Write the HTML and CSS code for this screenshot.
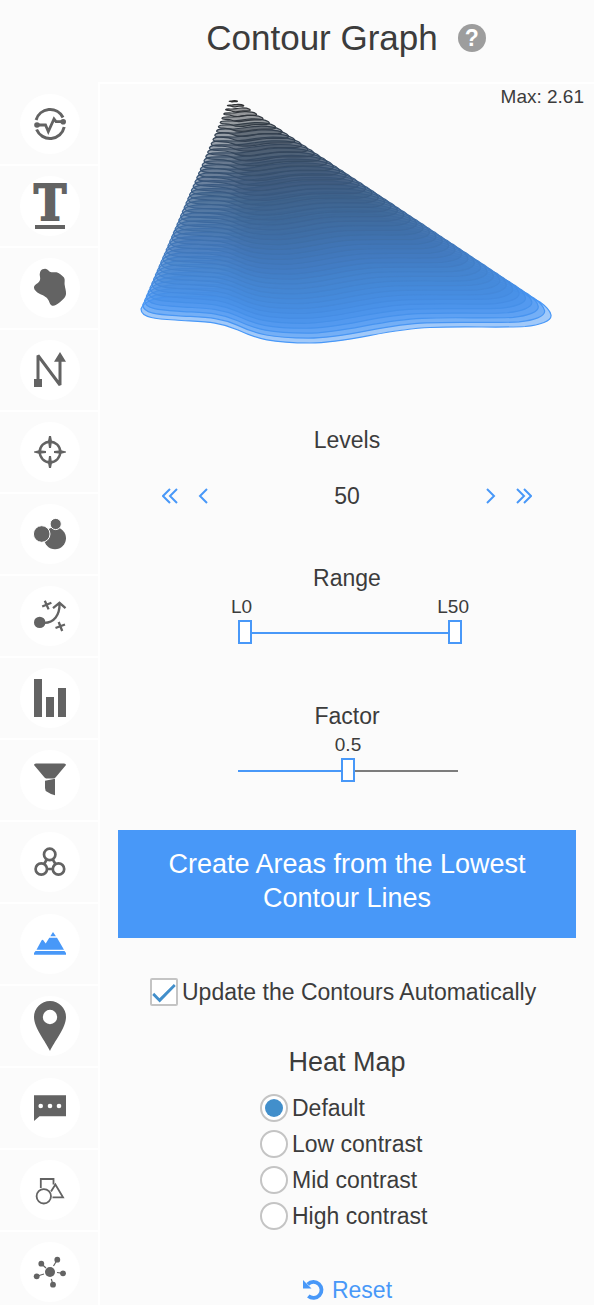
FILE: index.html
```
<!DOCTYPE html>
<html lang="en">
<head>
    <meta charset="UTF-8">
    <meta name="viewport" content="width=device-width, initial-scale=1.0">
    <title>Contour Graph</title>
    <link rel="stylesheet" href="styles.css">
</head>
<body>
    <div class="app">
        <header class="header">
            <h1>Contour Graph</h1>
            <button type="button" class="help" aria-label="Help">?</button>
        </header>

        <nav class="sidebar">
            <button type="button" class="tool" aria-label="Signal">
                <svg viewBox="0 0 60 60"><g class="line" stroke-width="3"><path d="M16.1 26A14.5 14.5 0 0 1 43 23.5M16.6 35.5A14.5 14.5 0 0 0 44.2 33"/><path d="M17 31h8.5l2.8 6.5L34 25l2 2.7h7" stroke-width="2.8"/></g><circle cx="17" cy="31" r="2.8"/><circle cx="43.2" cy="27.8" r="2.8"/></svg>
            </button>
            <button type="button" class="tool" aria-label="Text">
                <svg viewBox="0 0 60 60"><text class="type-icon" x="30" y="44" text-anchor="middle">T</text><path d="M15 49h30v4H15z"/></svg>
            </button>
            <button type="button" class="tool" aria-label="Area">
                <svg viewBox="0 0 60 60"><path d="M22.5 11.3C25.5 9.8 27.5 11 29 13C31 15.3 34 13.8 36.500 14.300C39 14.900 42 17.500 43.500 19C45.500 21 44.300 24 44.700 27C45 30 46.300 33 46 36C45.800 39.500 42 42.500 39.500 44.500C36.500 47 33.500 48.800 31.300 47.300C29.300 46 29.500 43 27.500 40.800C25 37.500 20 36.500 17 34.300C15 32.500 13.300 30.500 14.200 28.300C15.500 26 19 25 20 22C20.800 19.500 19 17 20 14.500C20.300 13 21.300 12 22.500 11.300z"/></svg>
            </button>
            <button type="button" class="tool" aria-label="Path">
                <svg viewBox="0 0 60 60"><path class="line" stroke-width="3" stroke-linejoin="bevel" d="M18 42V15.5L40 45V20"/><path d="M14 39h8v8h-8zM40 12l-6 9.7h12z"/></svg>
            </button>
            <button type="button" class="tool" aria-label="Target">
                <svg viewBox="0 0 60 60"><circle class="line" cx="30" cy="30" r="10.3" stroke-width="2.4"/><path d="M29 14h2l1 5-1 7h-2l-1-7zM29 46h2l1-5-1-7h-2l-1 7zM14 29.5v1l5 1.2 7-.7v-2l-7-.7zM46 29.5v1l-5 1.2-7-.7v-2l7-.7z"/></svg>
            </button>
            <button type="button" class="tool" aria-label="Clusters">
                <svg viewBox="0 0 60 60"><circle cx="35" cy="34.3" r="11"/><g stroke="#fff"><circle cx="21.7" cy="30" r="8.3"/><circle cx="35.7" cy="20" r="5.6"/></g></svg>
            </button>
            <button type="button" class="tool" aria-label="Strategy">
                <svg viewBox="0 0 60 60"><circle cx="19.7" cy="36.4" r="5.7"/><g class="line" stroke-width="2.3"><path d="M24 36.8C34 37 40 29 39.5 17M33 22.2l6.5-5.4 6 5.4"/><path d="M22.2 20.5l9.2-3.8M24.8 14.7l3.8 8.7M35.5 42l9.5-3.5M38.7 36l3.5 9"/></g></svg>
            </button>
            <button type="button" class="tool" aria-label="Bar chart">
                <svg viewBox="0 0 60 60"><path d="M14 11h8v38h-8zM26 29h8v20h-8zM38 20h8v29h-8z"/></svg>
            </button>
            <button type="button" class="tool" aria-label="Filter">
                <svg viewBox="0 0 60 60"><path d="M14 15Q14 13.5 16 13.500H44Q46 13.500 46 15L35.500 27.500 34 28.500H26L24.500 27.500zM25 30.700l10-1.900v16.500l-4-1.200-5.300-3.100-.7-3z"/></svg>
            </button>
            <button type="button" class="tool" aria-label="Groups">
                <svg viewBox="0 0 60 60"><g class="line" stroke-width="2.7"><circle cx="29.7" cy="22.4" r="5.7"/><circle cx="21.3" cy="37" r="5.7"/><circle cx="38.5" cy="37" r="5.7"/><path d="M27 37h6M26.8 27.4l-2.6 4.6M32.6 27.4l2.9 4.6"/></g></svg>
            </button>
            <button type="button" class="tool active" aria-label="Contours">
                <svg viewBox="0 0 60 60"><path d="M33 18l2.900 4.300h-5.600zM16.500 35.800l5-9.300q1-1.300 2 0l2.200 3 3.600-5.800H37l7 12.100zM15.500 37h29l1.500 2v1.800H14V39z"/></svg>
            </button>
            <button type="button" class="tool" aria-label="Places">
                <svg viewBox="0 0 60 60"><path fill-rule="evenodd" d="M30 55C26 46 14 32 14 21A16 16 0 0 1 46 21C46 32 34 46 30 55zM30 13.800a7.200 7.200 0 1 0 0 14.400a7.200 7.200 0 1 0 0-14.400z"/></svg>
            </button>
            <button type="button" class="tool" aria-label="Comments">
                <svg viewBox="0 0 60 60"><path d="M14 17.300h32v21H19.500L14 43z"/><g fill="#fff"><circle cx="20.7" cy="28" r="2.3"/><circle cx="30" cy="28" r="2.3"/><circle cx="39" cy="28" r="2.3"/></g></svg>
            </button>
            <button type="button" class="tool" aria-label="Shapes">
                <svg viewBox="0 0 60 60"><g class="line" stroke-width="1.8"><path d="M20.800 28V19h12.700v5.500M31 31.500l4.400-7L43 37.300H32.500"/><circle cx="23.8" cy="36.3" r="7.2"/></g></svg>
            </button>
            <button type="button" class="tool" aria-label="Network">
                <svg viewBox="0 0 60 60"><path class="line" stroke-width="1.2" d="M26 26l-4.700-4.300M33.500 24l3.800-6.300M24 32l-7.300 2.300M37 30.500l6 .8M31.300 37l1.700 5.700"/><circle cx="30" cy="30" r="5"/><circle cx="21.3" cy="21.7" r="2.9"/><circle cx="37.3" cy="17.7" r="2.9"/><circle cx="16.7" cy="34.3" r="2.9"/><circle cx="43" cy="31.3" r="2.9"/><circle cx="33" cy="42.7" r="2.9"/></svg>
            </button>
        </nav>

        <main class="panel">
            <div class="chart">
                <svg id="contours" viewBox="0 0 494 340" role="img" aria-label="Contour levels"></svg>
                <span class="max">Max: 2.61</span>
            </div>

            <div class="fields">
                <section class="field">
                    <h2>Levels</h2>
                    <div class="stepper">
                        <button type="button" class="step" aria-label="First"><svg width="16" height="16"><path d="M8 1L1 8l7 7M15 1L8 8l7 7"/></svg></button>
                        <button type="button" class="step" aria-label="Previous"><svg width="10" height="16"><path d="M9 1L2 8l7 7"/></svg></button>
                        <output class="level-count">50</output>
                        <button type="button" class="step" aria-label="Next"><svg width="10" height="16"><path d="M1 1l7 7-7 7"/></svg></button>
                        <button type="button" class="step" aria-label="Last"><svg width="16" height="16"><path d="M1 1l7 7-7 7M8 1l7 7-7 7"/></svg></button>
                    </div>
                </section>

                <section class="field">
                    <h2>Range</h2>
                    <div class="slider slider-range">
                        <div class="slider-labels">
                            <label for="range-from">L0</label>
                            <label for="range-to">L50</label>
                        </div>
                        <div class="slider-track">
                            <input type="range" id="range-from" min="0" max="50" value="0">
                            <input type="range" id="range-to" min="0" max="50" value="50">
                        </div>
                    </div>
                </section>

                <section class="field">
                    <h2><label for="factor">Factor</label></h2>
                    <div class="slider">
                        <output class="slider-value" for="factor">0.5</output>
                        <div class="slider-track half">
                            <input type="range" id="factor" min="0" max="1" step="0.1" value="0.5">
                        </div>
                    </div>
                </section>
            </div>

            <button type="button" class="btn">Create Areas from the Lowest Contour Lines</button>

            <label class="option auto-update">
                <input type="checkbox" checked>
                <span>Update the Contours Automatically</span>
            </label>

            <fieldset class="heat-map">
                <legend>Heat Map</legend>
                <label class="option"><input type="radio" name="heat" checked><span>Default</span></label>
                <label class="option"><input type="radio" name="heat"><span>Low contrast</span></label>
                <label class="option"><input type="radio" name="heat"><span>Mid contrast</span></label>
                <label class="option"><input type="radio" name="heat"><span>High contrast</span></label>
            </fieldset>

            <button type="button" class="reset">
                <svg width="22" height="22" viewBox="0 0 22 22"><path d="M5.8 5.3A8 8 0 1 1 6.3 17" fill="none" stroke="currentColor" stroke-width="3.8"/><path d="M1 1v8.500h8.500z"/></svg>
                Reset
            </button>
        </main>
    </div>

    <script>
        // Outline of the lowest contour, every other level shrinks towards the peak
        const outline = 'M41 225C41 234 57 235 75 236C102 238 118 237 138 246C157 255 172 259 210 259C250 259 285 245 330 243.5C365 242 400 244 425 242.5C440 241 452 237 451 231C450 226 447 223 440 218C405 198 360 194 300 196C240 199 200 210 150 213C100 214 48 206 41 225z';
        const peak = { x: 131, y: 13 };
        const low = [72, 152, 248];
        const high = [48, 48, 48];
        const levels = 50;
        const svg = document.getElementById('contours');

        for (let i = 0; i < levels; i++) {
            const t = i / (levels - 1);
            const scale = 1 - i / levels;
            const color = low.map((c, n) => Math.round(c + (high[n] - c) * t));
            const path = document.createElementNS('http://www.w3.org/2000/svg', 'path');
            path.setAttribute('d', outline);
            path.setAttribute('transform', `translate(${peak.x} ${peak.y}) scale(${scale}) translate(${-peak.x} ${-peak.y})`);
            path.setAttribute('fill', `rgb(${color})`);
            path.setAttribute('stroke', `rgb(${color})`);
            svg.appendChild(path);
        }
    </script>
</body>
</html>
```

FILE: styles.css
```
* {
    margin: 0;
    padding: 0;
    box-sizing: border-box;
}

body {
    background: #fbfbfb;
    color: #3c3c3c;
    font-family: "Helvetica Neue", "Liberation Sans", Arial, sans-serif;
    font-size: 23px;
    font-weight: 300;
    line-height: 32px;
}

button,
input {
    font: inherit;
    color: inherit;
}

button {
    border: none;
    background: none;
    cursor: pointer;
}

svg {
    display: block;
}

.app {
    display: grid;
    grid-template-columns: 100px minmax(0, 1fr);
    grid-template-rows: 84px minmax(0, 1fr);
    height: 100vh;
    overflow: hidden;
}

/* header */

.header {
    grid-column: 2;
    display: flex;
    justify-content: center;
    align-items: center;
    gap: 20px;
    padding-bottom: 6px;
    margin-left: -2px;
    border-bottom: 2px solid #fff;
}

.header h1 {
    font-size: 35px;
    font-weight: 300;
    line-height: 44px;
}

.help {
    width: 28px;
    height: 28px;
    border-radius: 50%;
    background: #9d9d9d;
    color: #fff;
    font-size: 23px;
    font-weight: bold;
    line-height: 28px;
}

/* sidebar */

.sidebar {
    border-right: 2px solid #fff;
    overflow: hidden;
}

.tool {
    display: block;
    width: 100%;
    height: 82px;
    padding: 10px 18px 10px 20px;
    border-bottom: 2px solid #fff;
    color: #636363;
}

.tool svg {
    width: 60px;
    height: 60px;
    border-radius: 50%;
    background: #fff;
    fill: currentColor;
    overflow: visible;
}

.tool.active {
    color: #4898f8;
}

.tool .line {
    fill: none;
    stroke: currentColor;
}

.type-icon {
    font-family: "DejaVu Serif Condensed", "DejaVu Serif", serif;
    font-size: 48px;
    font-weight: bold;
    stroke: currentColor;
    stroke-width: 2px;
}

/* panel */

.panel {
    display: flex;
    flex-direction: column;
    overflow: hidden;
}

.chart {
    position: relative;
}

.chart svg {
    width: 100%;
}

.chart path {
    fill-opacity: 0.5;
    stroke-width: 1.2px;
    vector-effect: non-scaling-stroke;
}

.max {
    position: absolute;
    top: 0;
    right: 10px;
    font-size: 19px;
    line-height: 26px;
}

.field {
    min-height: 138px;
    text-align: center;
}

.field:last-child {
    min-height: 82px;
}

.field h2 {
    font-size: 23px;
    font-weight: 300;
}

.stepper {
    display: flex;
    align-items: center;
    gap: 20px;
    width: 370px;
    margin: 24px auto 0;
}

.step {
    color: #4898f8;
}

.step path {
    fill: none;
    stroke: currentColor;
    stroke-width: 2px;
}

.level-count {
    flex: 1;
}

.slider {
    width: 220px;
    margin-left: calc(50% - 109px);
    font-size: 19px;
    line-height: 26px;
}

.slider-range {
    width: 224px;
}

.slider-labels {
    display: flex;
    justify-content: space-between;
    margin: 0 -7px;
}

.slider-value {
    display: block;
}

.slider-track {
    display: grid;
    background: linear-gradient(#4898f8, #4898f8) 0 12px / 100% 2px no-repeat;
}

.slider-track.half {
    background-image: linear-gradient(90deg, #4898f8 50%, #7c7c7c 50%);
}

.slider-track input {
    grid-area: 1 / 1;
    width: 100%;
    height: 24px;
    appearance: none;
    background: transparent;
    pointer-events: none;
}

.slider-track input::-webkit-slider-thumb {
    appearance: none;
    width: 14px;
    height: 24px;
    border: 2px solid #4898f8;
    background: #fff;
    pointer-events: auto;
    cursor: pointer;
}

.btn {
    margin: 48px 18px 40px;
    padding: 17px 40px 23px;
    background: #4898f8;
    color: #fff;
    font-size: 27px;
    line-height: 34px;
}

.option {
    display: flex;
    align-items: center;
    gap: 4px;
    height: 28px;
    line-height: 28px;
}

.option input {
    appearance: none;
    flex: none;
    display: grid;
    place-items: center;
    width: 28px;
    height: 28px;
    border: 2px solid #c4c4c4;
    background: #fff;
}

.option input[type="checkbox"] {
    border-radius: 2px;
}

.option input[type="checkbox"]:checked::before {
    content: "";
    width: 24px;
    height: 24px;
    background: #428fcb;
    clip-path: polygon(1% 62%, 9% 53%, 31% 76%, 91% 17%, 99% 25%, 32% 94%);
}

.option input[type="radio"] {
    border-radius: 50%;
}

.option input[type="radio"]:checked::before {
    content: "";
    width: 18px;
    height: 18px;
    border-radius: 50%;
    background: #428fcb;
}

.auto-update {
    width: 394px;
    margin: 0 auto;
}

.heat-map {
    display: flex;
    flex-direction: column;
    gap: 8px;
    width: 174px;
    margin: 40px auto 0;
    border: none;
}

.heat-map legend {
    margin: 0 auto 16px;
    font-size: 27px;
}

.reset {
    display: flex;
    align-items: center;
    gap: 8px;
    margin: 44px auto 0;
    color: #4898f8;
}

.reset svg {
    fill: currentColor;
}
```
